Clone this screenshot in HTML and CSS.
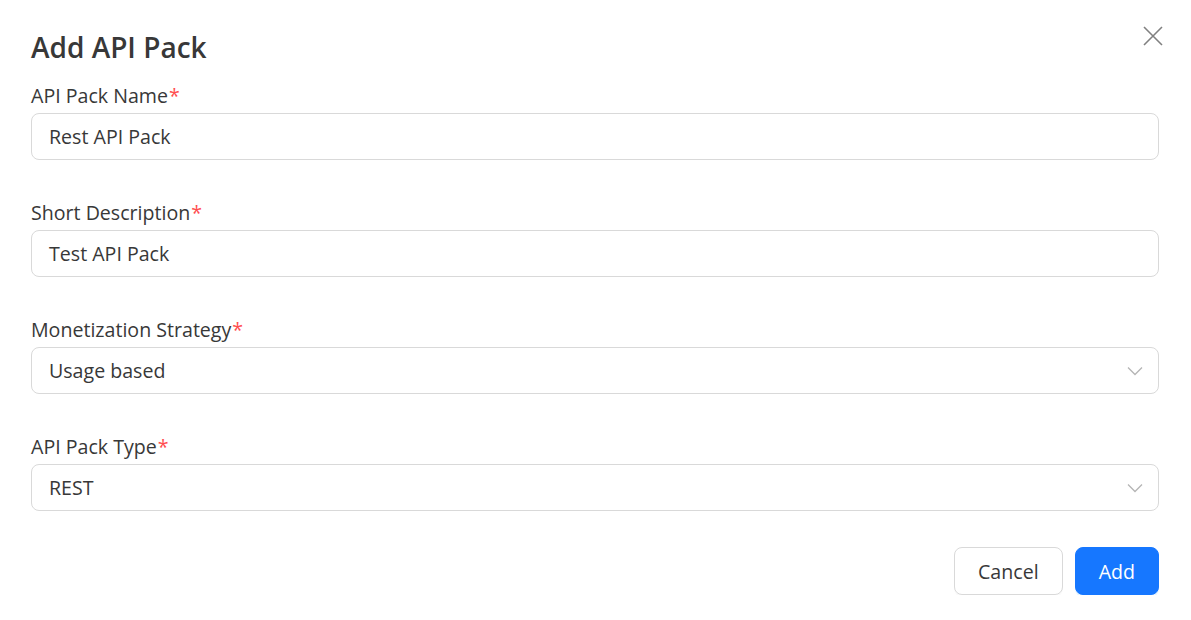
FILE: index.html
```html
<!DOCTYPE html>
<html>
<head>
<meta charset="utf-8">
<link rel="stylesheet" href="styles.css">
</head>
<body>
<div class="modal">
  <button class="close" aria-label="Close">
    <svg width="20" height="20" viewBox="0 0 20 20"><path d="M1 1L19 19M19 1L1 19" stroke="#808080" stroke-width="1.6" fill="none"/></svg>
  </button>
  <h1 class="title">Add API Pack</h1>
  <form class="form">
    <div class="field">
      <label class="label">API Pack Name<span class="req">*</span></label>
      <div class="input">Rest API Pack</div>
    </div>
    <div class="field">
      <label class="label">Short Description<span class="req">*</span></label>
      <div class="input">Test API Pack</div>
    </div>
    <div class="field">
      <label class="label">Monetization Strategy<span class="req">*</span></label>
      <div class="input select">Usage based
        <svg class="chev" width="16" height="10" viewBox="0 0 16 10"><path d="M1 1.5L8 8.5L15 1.5" stroke="#b5b5b5" stroke-width="1.3" fill="none"/></svg>
      </div>
    </div>
    <div class="field">
      <label class="label">API Pack Type<span class="req">*</span></label>
      <div class="input select">REST
        <svg class="chev" width="16" height="10" viewBox="0 0 16 10"><path d="M1 1.5L8 8.5L15 1.5" stroke="#b5b5b5" stroke-width="1.3" fill="none"/></svg>
      </div>
    </div>
    <div class="footer">
      <button type="button" class="btn">Cancel</button>
      <button type="button" class="btn primary">Add</button>
    </div>
  </form>
</div>
</body>
</html>
```
FILE: styles.css
```css
* { box-sizing: border-box; }
html, body { margin: 0; padding: 0; background: #fff; }
body {
  font-family: "Open Sans", "Noto Sans", sans-serif;
  color: #333;
}
.modal {
  position: relative;
  padding: 26px 32px 0 31px;
  width: 1191px;
}
.close {
  position: absolute;
  top: 26px;
  right: 28px;
  background: none;
  border: 0;
  padding: 0;
  width: 20px;
  height: 20px;
  cursor: pointer;
}
.title {
  margin: 0;
  font-size: 28px;
  font-weight: 600;
  line-height: 42px;
  color: #383838;
}
.form {
  display: flex;
  flex-direction: column;
  margin-top: 14px;
}
.field {
  display: flex;
  flex-direction: column;
  margin-bottom: 39px;
}
.label {
  font-size: 19.6px;
  line-height: 28px;
  margin-bottom: 3px;
  color: #383838;
}
.req { color: #ff4d4f; margin-left: 1px; }
.input {
  height: 47px;
  border: 1px solid #d9d9d9;
  border-radius: 8px;
  padding: 0 17px;
  display: flex;
  align-items: center;
  font-size: 19.6px;
  color: #383838;
}
.select { justify-content: space-between; }
.chev { margin-right: -2px; }
.footer {
  display: flex;
  justify-content: flex-end;
  gap: 12px;
  margin-top: -3px;
}
.btn {
  height: 48px;
  padding: 0 23px;
  border: 1px solid #d9d9d9;
  border-radius: 8px;
  background: #fff;
  font-family: inherit;
  font-size: 19.6px;
  color: #383838;
  box-shadow: 0 2px 0 rgba(0,0,0,0.02);
}
.btn.primary {
  background: #1677ff;
  border-color: #1677ff;
  color: #fff;
  padding: 0 23px;
  box-shadow: 0 2px 0 rgba(5,145,255,0.1);
}
```
